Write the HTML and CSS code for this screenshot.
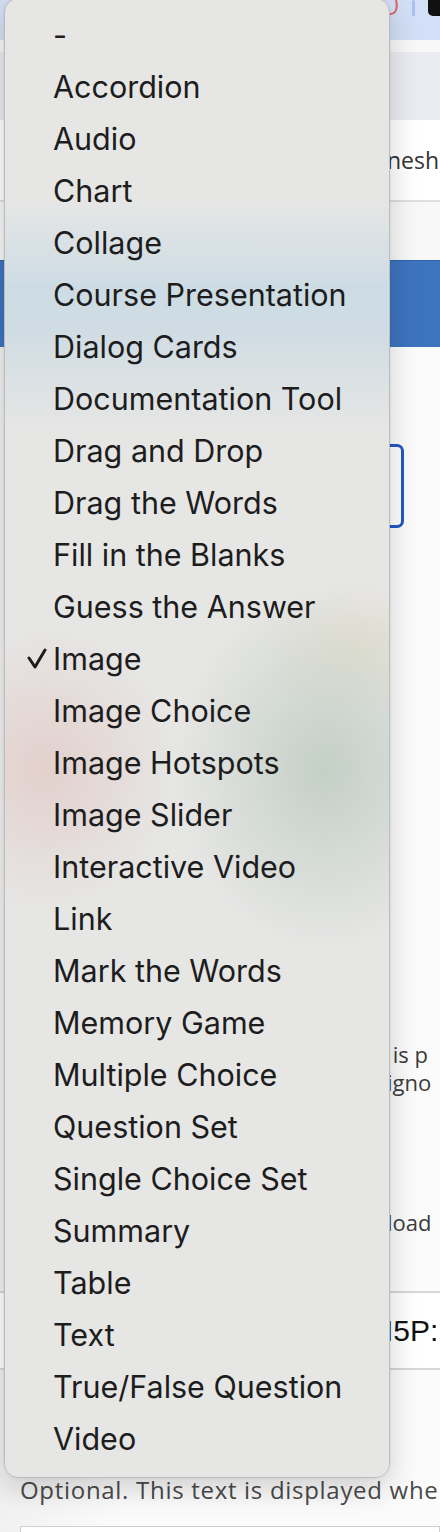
FILE: index.html
```html
<!DOCTYPE html>
<html lang="en">
<head>
<meta charset="UTF-8">
<meta name="viewport" content="width=device-width, initial-scale=1.0">
<title>Content type select</title>
<link rel="stylesheet" href="styles.css">
</head>
<body>
<div class="page">
  <div class="browser-bar">
    <span class="bar-spacer"></span>
    <svg class="ext-icon" width="22" height="16" viewBox="0 0 22 16"><path d="M4 0 C 2 6, 6 14, 12 14 C 18 14, 20 8, 18 0" fill="none" stroke="#e0615a" stroke-width="2"/></svg>
    <span class="bar-divider"></span>
    <span class="bar-avatar"></span>
  </div>
  <div class="tab-strip"></div>
  <div class="user-row">
    <span class="user-pad"></span><span class="user-name">nesh</span>
  </div>
  <div class="title-bar"></div>
  <div class="editor">
    <div class="select-box"></div>
    <div class="desc">
      <span class="desc-pad"></span><span> is p</span>
      <br><span class="desc-pad"></span><span>igno</span>
    </div>
    <div class="desc desc-load">
      <span class="desc-pad"></span><span>load</span>
    </div>
    <div class="code-row">
      <span class="code-pad"></span><span class="code-text">I5P:</span>
    </div>
    <p class="optional">Optional. This text is displayed whe</p>
    <div class="next-field"></div>
  </div>

  <ul class="menu">
    <li class="item"><span class="check"></span><span>-</span></li>
    <li class="item"><span class="check"></span><span>Accordion</span></li>
    <li class="item"><span class="check"></span><span>Audio</span></li>
    <li class="item"><span class="check"></span><span>Chart</span></li>
    <li class="item"><span class="check"></span><span>Collage</span></li>
    <li class="item"><span class="check"></span><span>Course Presentation</span></li>
    <li class="item"><span class="check"></span><span>Dialog Cards</span></li>
    <li class="item"><span class="check"></span><span>Documentation Tool</span></li>
    <li class="item"><span class="check"></span><span>Drag and Drop</span></li>
    <li class="item"><span class="check"></span><span>Drag the Words</span></li>
    <li class="item"><span class="check"></span><span>Fill in the Blanks</span></li>
    <li class="item"><span class="check"></span><span>Guess the Answer</span></li>
    <li class="item selected"><span class="check"><svg width="20" height="22" viewBox="0 0 20 22"><polyline points="2,10 8,19 18,2" fill="none" stroke="#1d1d1d" stroke-width="3" stroke-linecap="round" stroke-linejoin="round"/></svg></span><span>Image</span></li>
    <li class="item"><span class="check"></span><span>Image Choice</span></li>
    <li class="item"><span class="check"></span><span>Image Hotspots</span></li>
    <li class="item"><span class="check"></span><span>Image Slider</span></li>
    <li class="item"><span class="check"></span><span>Interactive Video</span></li>
    <li class="item"><span class="check"></span><span>Link</span></li>
    <li class="item"><span class="check"></span><span>Mark the Words</span></li>
    <li class="item"><span class="check"></span><span>Memory Game</span></li>
    <li class="item"><span class="check"></span><span>Multiple Choice</span></li>
    <li class="item"><span class="check"></span><span>Question Set</span></li>
    <li class="item"><span class="check"></span><span>Single Choice Set</span></li>
    <li class="item"><span class="check"></span><span>Summary</span></li>
    <li class="item"><span class="check"></span><span>Table</span></li>
    <li class="item"><span class="check"></span><span>Text</span></li>
    <li class="item"><span class="check"></span><span>True/False Question</span></li>
    <li class="item"><span class="check"></span><span>Video</span></li>
  </ul>
</div>
</body>
</html>
```

FILE: styles.css
```css
html, body { margin: 0; padding: 0; }
body { width: 440px; height: 1532px; overflow: hidden; background: #f8f8f8; font-family: "Open Sans", sans-serif; }
.page { position: relative; width: 440px; height: 1532px; overflow: hidden; }

.browser-bar { height: 40px; background: #d3dff6; display: flex; align-items: flex-start; }
.bar-spacer { flex: 1; }
.ext-icon { margin-right: 12px; }
.bar-divider { width: 3px; height: 16px; background: #a9c1ee; border-radius: 2px; margin-right: 13px; }
.bar-avatar { width: 12px; height: 16px; background: #111; border-bottom-left-radius: 5px; }

.tab-strip { height: 68px; margin-top: 12px; background: #ebecf1; }

.user-row { height: 80px; background: #fff; border-bottom: 2px solid #dedede; display: flex; align-items: center; white-space: nowrap; font-size: 23px; color: #333; }
.user-pad { width: 387px; flex: none; }

.title-bar { height: 86px; margin-top: 58px; background: #3d74be; border-top: 1px solid #2f63a8; }

.editor { background: linear-gradient(90deg, #f1f1f1 0, #fbfbfb 120px, #fbfbfb 100%); padding: 97px 0 0 20px; height: 1100px; }
.select-box { width: 378px; height: 78px; border: 3px solid #2458c4; border-radius: 7px; background: #fff; }

.desc { margin-top: 512px; font-size: 22px; line-height: 28px; color: #3c3c3c; white-space: nowrap; }
.desc-pad { display: inline-block; width: 367px; }
.desc-load { margin-top: 112px; }

.code-row { margin: 55px 0 0 -20px; height: 75px; background: #fff; border-top: 2px solid #d7d7d7; border-bottom: 2px solid #d7d7d7; display: flex; align-items: center; white-space: nowrap; font-family: "Liberation Sans", Arial, sans-serif; font-size: 30px; color: #111; }
.code-pad { width: 385px; flex: none; }

.optional { margin: 105px 0 0; font-size: 24px; letter-spacing: 0.7px; color: #4a4a4a; white-space: nowrap; line-height: 30px; }
.next-field { margin-top: 21px; height: 40px; border: 1px solid #cfcfcf; background: #fff; }

.menu {
  position: absolute; left: 4px; top: -2px; width: 386px; margin: 0; padding: 10px 0 12px; list-style: none; box-sizing: border-box;
  border: 1px solid #bcbcbc; border-radius: 14px;
  background:
    radial-gradient(ellipse 130px 140px at 40px 770px, rgba(226, 204, 200, 0.85), rgba(226, 204, 200, 0) 100%),
    radial-gradient(ellipse 150px 180px at 320px 770px, rgba(194, 206, 196, 0.95), rgba(194, 206, 196, 0) 100%),
    radial-gradient(ellipse 100px 70px at 350px 650px, rgba(228, 222, 206, 0.8), rgba(228, 222, 206, 0) 100%),
    linear-gradient(180deg, #e6e6e5 0, #e6e6e5 200px, #cddce4 290px, #cfdce3 330px, #e6e6e5 430px, #e6e6e5 100%);
  box-shadow: 0 10px 30px rgba(0, 0, 0, 0.18), 0 0 2px rgba(0, 0, 0, 0.1);
  font-family: Inter, "Liberation Sans", sans-serif; font-size: 30.5px; color: #1d1d1d;
}
.item { display: flex; align-items: center; height: 52px; line-height: 52px; white-space: nowrap; }
.check { width: 48px; flex: none; display: flex; justify-content: flex-end; padding-right: 6px; box-sizing: border-box; }
.check svg { display: block; }
```
